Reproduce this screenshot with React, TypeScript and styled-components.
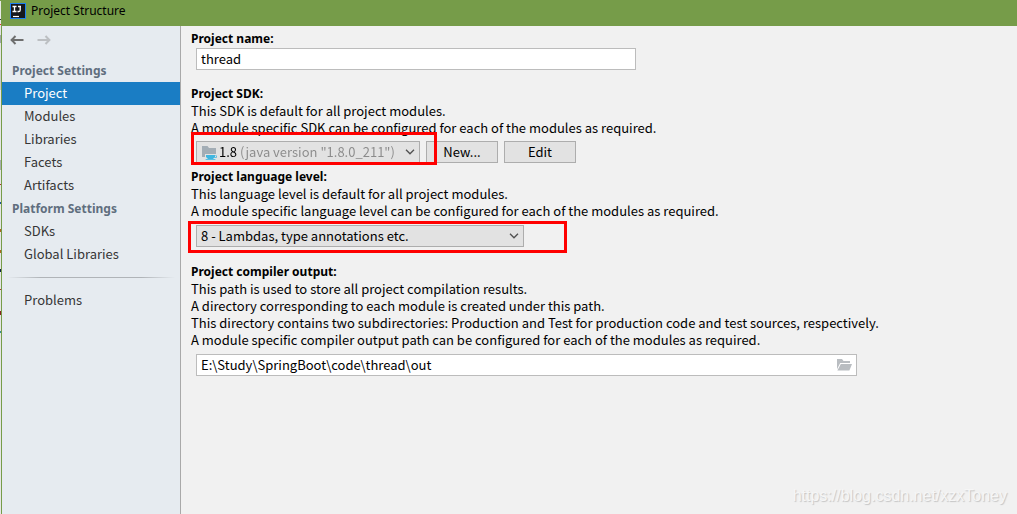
import React from 'react';
import styled, { createGlobalStyle } from 'styled-components';

const bodyFont = `"Noto Sans CJK SC", "Noto Sans", sans-serif`;
const titleFont = `"Noto Sans", "Noto Sans CJK SC", sans-serif`;

const GlobalStyle = createGlobalStyle`
  *, *::before, *::after { box-sizing: border-box; }
  body { margin: 0; background: #f1f1f1; color: #000; font: 13px/17px ${bodyFont}; }
  button, input, select { font: inherit; color: inherit; margin: 0; border-radius: 0; }
`;

const Screen = styled.div`
  position: relative;
  display: flex;
  min-height: 100vh;
`;

/* Sliver of the editor window that shows behind the dialog */
const Backdrop = styled.div`
  flex: none;
  width: 1px;
  background: linear-gradient(
    #769c49 0 1px, #e9e9e9 1px 19px, #333 19px 20px, #e9e9e9 20px 24px, #e33 24px 25px,
    #e4e4e4 25px 35px, #a0a5a8 35px 43px, #e4e4e4 43px 70px, #c9cccd 70px 90px,
    #e6e6e6 90px 160px, #a8adaf 160px 170px, #e6e6e6 170px 184px, #a33 184px 185px,
    #e6e6e6 185px 202px, #259 202px 204px, #e6e6e6 204px 229px, #a62 229px 232px,
    #e6e6e6 232px 250px, #a62 250px 253px, #e6e6e6 253px 269px, #124 269px 272px,
    #e6e6e6 272px 289px, #a33 289px 290px, #e6e6e6 290px 311px, #822 311px 315px,
    #e6e6e6 315px 331px, #3a8f8f 331px 333px, #e6e6e6 333px
  );
`;

const Dialog = styled.div`
  flex: 1;
  min-width: 0;
  display: flex;
  flex-direction: column;
  border-left: 1px solid #769c49;
`;

const TitleBar = styled.header`
  display: flex;
  align-items: center;
  gap: 5px;
  height: 26px;
  padding: 0 8px 4px;
  background: #769c49;
`;

const Title = styled.h1`
  margin: 0;
  font: 400 12px/20px ${titleFont};
`;

const Body = styled.div`
  flex: 1;
  display: flex;
`;

const Sidebar = styled.nav`
  flex: none;
  width: 179px;
  background: #e6ebf0;
  border-right: 1px solid #a9a9a9;
`;

const History = styled.div`
  display: flex;
  align-items: center;
  gap: 13px;
  height: 33px;
  padding: 0 8px 5px;
`;

const HistoryButton = styled.button`
  display: flex;
  padding: 0;
  border: 0;
  background: none;
  color: #6e6e6e;
  &:disabled { color: #bcbfc2; }
`;

const GroupTitle = styled.h2`
  margin: 0;
  padding-left: 10px;
  font: 700 12px/24px ${titleFont};
  height: 23px;
  color: #606e7e;
`;

const NavList = styled.ul`
  margin: 0;
  padding: 0;
  list-style: none;
`;

const NavLink = styled.a<{ $active?: boolean }>`
  display: block;
  height: 23px;
  padding-left: 22px;
  line-height: 22px;
  text-decoration: none;
  color: ${p => (p.$active ? '#fff' : '#363636')};
  background: ${p => (p.$active ? '#1a7dc4' : 'transparent')};
`;

const Separator = styled.hr`
  height: 1px;
  margin: 11px 5px;
  border: 0;
  background: linear-gradient(to right, transparent, #b0b4b8 20%, #b0b4b8 80%, transparent);
`;

const Content = styled.main`
  flex: 1;
  min-width: 0;
  padding: 4px 10px;
`;

const Section = styled.section<{ $gap: number }>`
  margin-bottom: ${p => p.$gap}px;
`;

const Label = styled.label`
  display: block;
  width: fit-content;
  font: 700 12px/17px ${titleFont};
`;

const Text = styled.p`
  margin: 0;
`;

const Controls = styled.div<{ $top: number }>`
  position: relative;
  display: flex;
  gap: 6px;
  margin-top: ${p => p.$top}px;
  padding-left: 5px;
`;

const Field = styled.div<{ $width: number }>`
  display: flex;
  align-items: center;
  width: ${p => p.$width}px;
  max-width: 100%;
  height: 22px;
  padding-right: 4px;
  border: 1px solid #bcbcbc;
  background: #fff;
`;

const TextInput = styled.input`
  flex: 1;
  min-width: 0;
  height: 20px;
  padding: 0 4px 2px;
  border: 0;
  outline: 0;
  background: none;
`;

const BrowseButton = styled.button`
  display: flex;
  padding: 0;
  border: 0;
  background: none;
`;

const Combo = styled.div<{ $width: number }>`
  display: flex;
  align-items: center;
  width: ${p => p.$width}px;
  height: 22px;
  padding: 0 4px;
  border: 1px solid #adadad;
  background: #e2e2e2;
`;

const Select = styled.select<{ $version?: boolean }>`
  flex: 1;
  min-width: 0;
  height: 20px;
  padding: 0 0 1px;
  border: 0;
  outline: 0;
  appearance: none;
  background: none;
  ${p => p.$version && `
    margin-left: 2px;
    color: transparent;
    background: linear-gradient(to right, #000 20px, #8a8a8a 20px);
    background-clip: text;
    -webkit-background-clip: text;
    option { color: #000; }
  `}
`;

const PushButton = styled.button`
  width: 72px;
  height: 22px;
  padding: 0 0 1px;
  border: 1px solid #adadad;
  background: #e2e2e2;
  line-height: 19px;
`;

const Highlight = styled.div<{ $box: 'sdk' | 'level' }>`
  position: absolute;
  top: ${p => (p.$box === 'sdk' ? -9 : -4)}px;
  left: ${p => (p.$box === 'sdk' ? 0 : -3)}px;
  width: ${p => (p.$box === 'sdk' ? 246 : 379)}px;
  height: ${p => (p.$box === 'sdk' ? 33 : 32)}px;
  border: 3px solid #f00;
  pointer-events: none;
`;

const Watermark = styled.div`
  position: absolute;
  right: 10px;
  bottom: 9px;
  font: 16px/18px "Liberation Sans", sans-serif;
  color: #f6f6f6;
  text-shadow: 1px 1px 1px #c4c4c4;
`;

const Logo = () => (
  <svg width="16" height="16" viewBox="0 0 16 16" aria-hidden="true">
    <rect width="16" height="16" fill="#1c7ff0" />
    <rect x="1" y="1" width="14" height="14" fill="#15181d" />
    <path d="M2.5 3.5h4M4.5 3.5v5M2.5 8.5h4M8 3.5h3M10.2 3.5v3.4q0 1.6-1.5 1.6H7.5" fill="none" stroke="#fff" strokeWidth="1.3" />
    <path d="M3 13.5h6" stroke="#fff" strokeWidth="1.2" />
  </svg>
);

const Arrow = ({ forward }: { forward?: boolean }) => (
  <svg width="14" height="10" viewBox="0 0 14 10" aria-hidden="true">
    <path
      d={forward ? 'M0.5 5H12M8.5 1L12.4 5L8.5 9' : 'M13.5 5H2M5.5 1L1.6 5L5.5 9'}
      fill="none" stroke="currentColor" strokeWidth="2"
    />
  </svg>
);

const SdkIcon = () => (
  <svg width="16" height="16" viewBox="0 0 16 16" aria-hidden="true">
    <path d="M1 2h5.5l1.5 2h7v6H4v3H1z" fill="#a3adb5" />
    <path d="M5 11h9v.4h1.8v2.4h-2.6L12 15H7L5 13z" fill="#40b6e0" />
    <path d="M4.6 15.2h9.8v.8H4.6z" fill="#40b6e0" />
    <path d="M14 12h1v1.1h-1z" fill="#e2e2e2" />
  </svg>
);

const Chevron = () => (
  <svg width="10" height="6" viewBox="0 0 10 6" aria-hidden="true">
    <path d="M1 0.8L5 4.8L9 0.8" fill="none" stroke="#505050" strokeWidth="1.3" />
  </svg>
);

const FolderIcon = () => (
  <svg width="15" height="12" viewBox="0 0 15 12" aria-hidden="true">
    <path d="M0 0h5l1.5 2H13v2H3.2L0 10.2z" fill="#b9bdc1" />
    <path d="M3.8 5H15l-2.6 6.5H0.4z" fill="#b9bdc1" />
  </svg>
);

const projectItems = ['Project', 'Modules', 'Libraries', 'Facets', 'Artifacts'];
const platformItems = ['SDKs', 'Global Libraries'];

const Items = ({ names, active }: { names: string[]; active?: string }) => (
  <NavList>
    {names.map(name => (
      <li key={name}>
        <NavLink href="#" $active={name === active}>{name}</NavLink>
      </li>
    ))}
  </NavList>
);

export default function App() {
  return (
    <Screen>
      <GlobalStyle />
      <Backdrop />
      <Dialog>
        <TitleBar>
          <Logo />
          <Title>Project Structure</Title>
        </TitleBar>
        <Body>
          <Sidebar>
            <History>
              <HistoryButton aria-label="Back"><Arrow /></HistoryButton>
              <HistoryButton aria-label="Forward" disabled><Arrow forward /></HistoryButton>
            </History>
            <GroupTitle>Project Settings</GroupTitle>
            <Items names={projectItems} active="Project" />
            <GroupTitle>Platform Settings</GroupTitle>
            <Items names={platformItems} />
            <Separator />
            <Items names={['Problems']} />
          </Sidebar>
          <Content>
            <Section $gap={15}>
              <Label htmlFor="name">Project name:</Label>
              <Controls $top={1}>
                <Field $width={440}><TextInput id="name" defaultValue="thread" /></Field>
              </Controls>
            </Section>
            <Section $gap={5}>
              <Label htmlFor="sdk">Project SDK:</Label>
              <Text>This SDK is default for all project modules.</Text>
              <Text>A module specific SDK can be configured for each of the modules as required.</Text>
              <Controls $top={5}>
                <Combo $width={224}>
                  <SdkIcon />
                  <Select id="sdk" $version>
                    <option>1.8 (java version "1.8.0_211")</option>
                  </Select>
                  <Chevron />
                </Combo>
                <PushButton>New...</PushButton>
                <PushButton>Edit</PushButton>
                <Highlight $box="sdk" />
              </Controls>
            </Section>
            <Section $gap={16}>
              <Label htmlFor="level">Project language level:</Label>
              <Text>This language level is default for all project modules.</Text>
              <Text>A module specific language level can be configured for each of the modules as required.</Text>
              <Controls $top={6}>
                <Combo $width={328}>
                  <Select id="level">
                    <option>8 - Lambdas, type annotations etc.</option>
                  </Select>
                  <Chevron />
                </Combo>
                <Highlight $box="level" />
              </Controls>
            </Section>
            <Section $gap={0}>
              <Label htmlFor="output">Project compiler output:</Label>
              <Text>This path is used to store all project compilation results.</Text>
              <Text>A directory corresponding to each module is created under this path.</Text>
              <Text>This directory contains two subdirectories: Production and Test for production code and test sources, respectively.</Text>
              <Text>A module specific compiler output path can be configured for each of the modules as required.</Text>
              <Controls $top={6}>
                <Field $width={661}>
                  <TextInput id="output" defaultValue={'E:\\Study\\SpringBoot\\code\\thread\\out'} />
                  <BrowseButton aria-label="Browse"><FolderIcon /></BrowseButton>
                </Field>
              </Controls>
            </Section>
          </Content>
        </Body>
      </Dialog>
      <Watermark>https://blog.csdn.net/xzxToney</Watermark>
    </Screen>
  );
}
